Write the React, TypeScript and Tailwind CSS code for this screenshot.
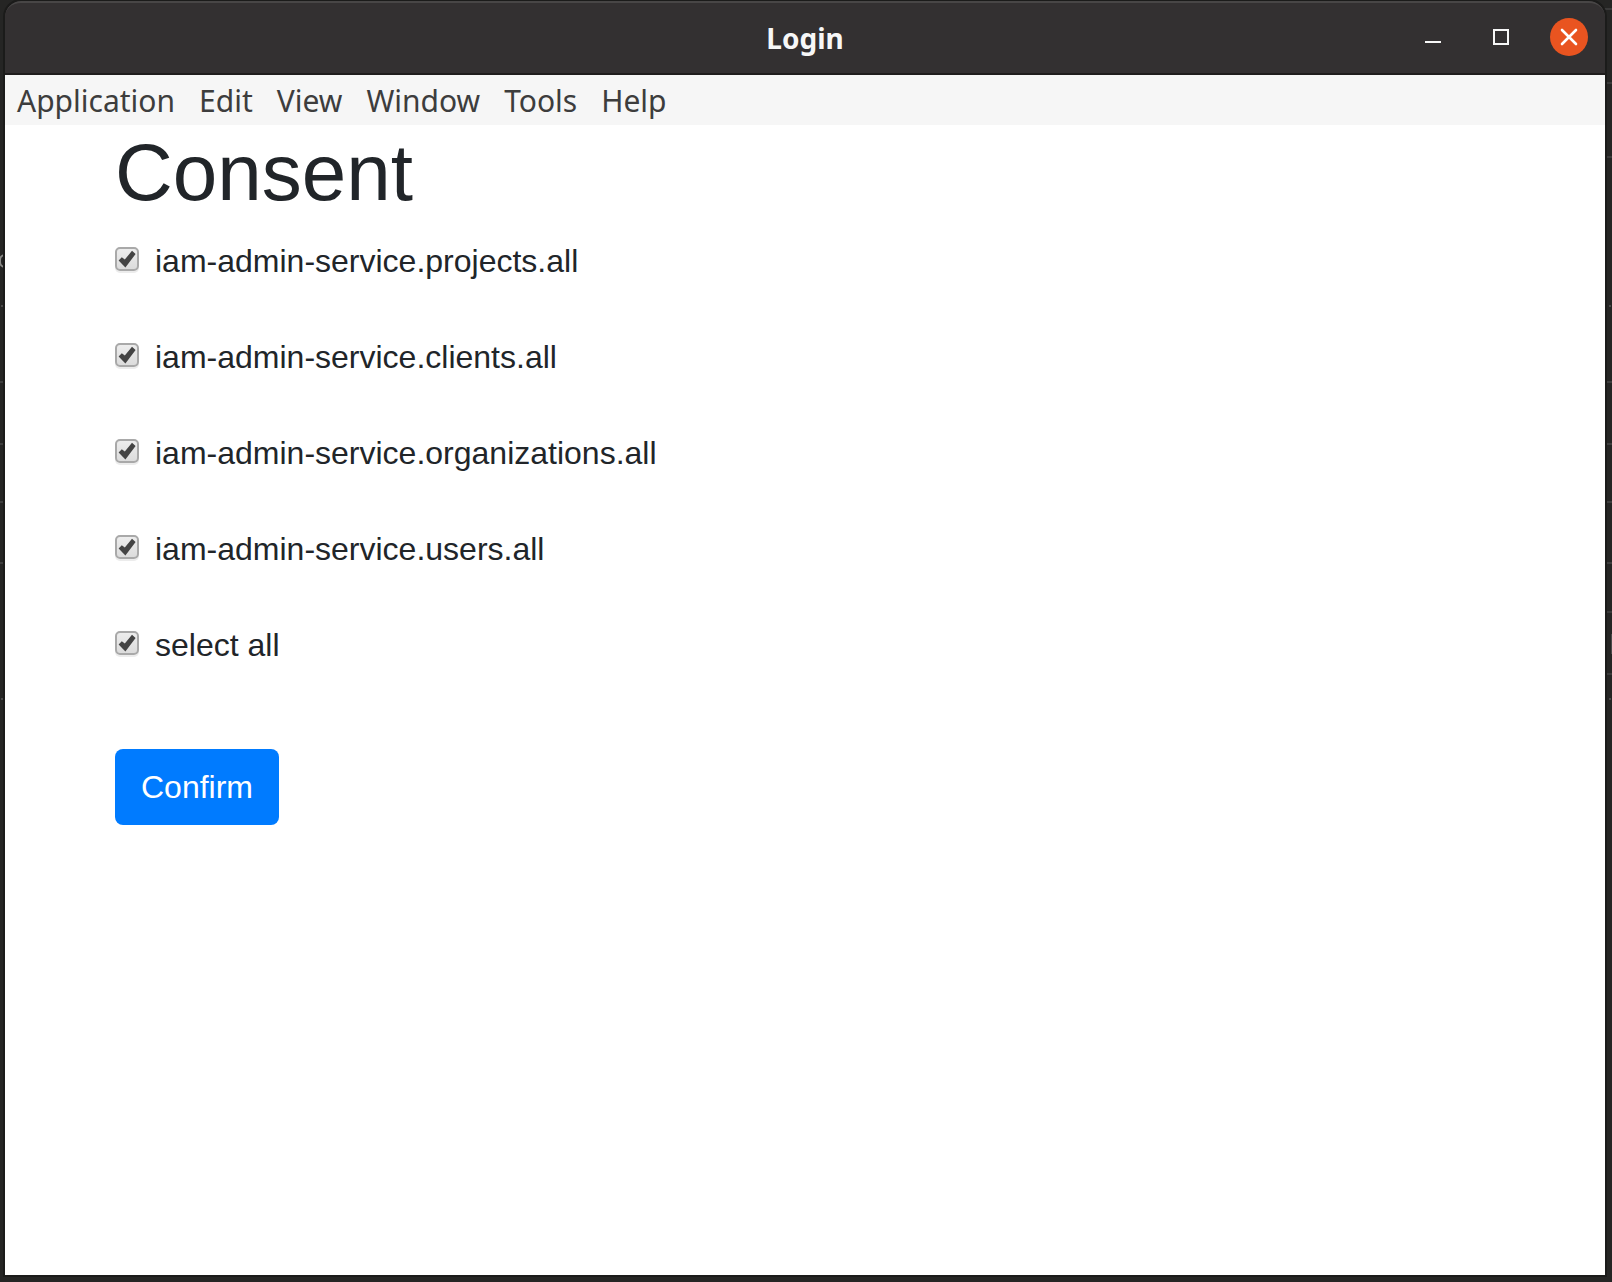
import { useState } from "react";

const menus = ["Application", "Edit", "View", "Window", "Tools", "Help"];

const scopes = [
  "iam-admin-service.projects.all",
  "iam-admin-service.clients.all",
  "iam-admin-service.organizations.all",
  "iam-admin-service.users.all",
];

const rulesBothSides = ["top-[381px]", "top-[443px]", "top-[501px]", "top-[562px]"];
const rulesRight = ["top-[8px]", "top-[82px]", "top-[156px]", "top-[611px]", "top-[673px]"];
const dots = ["top-[305px]", "top-[698px]"];

function Backdrop() {
  return (
    <div aria-hidden="true" className="absolute inset-0 overflow-hidden bg-[#252524]">
      {rulesBothSides.map((top) => (
        <div key={top} className={`absolute inset-x-0 h-0.5 bg-[#3e3e3e] ${top}`} />
      ))}
      {rulesRight.map((top) => (
        <div key={top} className={`absolute right-0 h-0.5 w-2 bg-[#3a3a3a] ${top}`} />
      ))}
      {dots.map((top) => (
        <div key={top} className={`absolute inset-x-px border-x-2 border-[#4a4a4a] h-0.5 ${top}`} />
      ))}
      <div className="absolute -left-px top-[254px] h-[14px] w-3 rounded-full border-2 border-[#8a8a88]" />
      <div className="absolute right-0 top-[634px] h-5 w-px bg-[#4a4a4a]" />
    </div>
  );
}

function CheckRow({
  id,
  label,
  checked,
  onChange,
}: {
  id: string;
  label: string;
  checked: boolean;
  onChange: (value: boolean) => void;
}) {
  return (
    <div className="flex items-start gap-4">
      <span className="relative mt-2.5 size-6 shrink-0">
        <input
          id={id}
          type="checkbox"
          checked={checked}
          onChange={(e) => onChange(e.target.checked)}
          className="peer block size-6 appearance-none rounded-[5px] border-2 border-[#a9a9a9] bg-linear-to-b from-[#ededed] to-[#dcdcdc] shadow-[0_2px_0_#ececec]"
        />
        <svg
          viewBox="0 0 24 24"
          aria-hidden="true"
          className="pointer-events-none absolute inset-0 hidden size-6 peer-checked:block"
        >
          <path d="M3.6 13.4 L6.8 10.2 L9.8 12.6 L17 3.8 L20.6 7 L10.4 20.4 Z" fill="#444444" />
        </svg>
      </span>
      <label htmlFor={id}>{label}</label>
    </div>
  );
}

export default function App() {
  const [checked, setChecked] = useState<boolean[]>(scopes.map(() => true));
  const all = checked.every(Boolean);

  return (
    <div className="relative isolate flex min-h-screen bg-[#252524] pt-px pr-[7px] pb-[7px] pl-[5px]">
      <Backdrop />
      <div className="relative flex flex-1 flex-col overflow-hidden rounded-t-2xl bg-[#333031] shadow-[0_0_0_2px_#1b1b1a]">
        <header className="grid h-[74px] grid-cols-[1fr_auto_1fr] items-center rounded-t-2xl border-t-2 border-b-2 border-t-[#484646] border-b-[#1f1d1d] bg-[#333031]">
          <h2 className="col-start-2 font-['Noto_Sans',sans-serif] text-[28px] leading-9 font-bold text-[#f7f7f7]">
            Login
          </h2>
          <div className="flex items-center justify-end gap-[30px] pr-[17px] pb-0.5 text-[#f7f7f7]">
            <button type="button" aria-label="Minimize" className="size-[38px]">
              <svg viewBox="0 0 38 38" aria-hidden="true">
                <rect x="11" y="23" width="16" height="2" fill="currentColor" />
              </svg>
            </button>
            <button type="button" aria-label="Maximize" className="size-[38px]">
              <svg viewBox="0 0 38 38" aria-hidden="true">
                <rect x="12" y="12" width="14" height="14" fill="none" stroke="currentColor" strokeWidth="2" />
              </svg>
            </button>
            <button type="button" aria-label="Close" className="size-[38px] rounded-full bg-[#e95420]">
              <svg viewBox="0 0 38 38" aria-hidden="true">
                <path d="M12 12 L26 26 M26 12 L12 26" stroke="#fff" strokeWidth="2.6" strokeLinecap="round" />
              </svg>
            </button>
          </div>
        </header>

        <nav className="flex h-[50px] items-center gap-6 bg-[#f6f6f6] pt-0.5 pl-3 font-['Noto_Sans',sans-serif] text-[30px] leading-9 text-[#3d3d3d]">
          {menus.map((m) => (
            <button key={m} type="button">
              {m}
            </button>
          ))}
        </nav>

        <main className="flex-1 bg-white px-[110px] font-['Liberation_Sans',Arial,sans-serif] text-[32px] leading-[48px] text-[#212529]">
          <h1 className="mb-4 text-[80px] leading-[96px]">Consent</h1>
          <form onSubmit={(e) => e.preventDefault()}>
            <div className="flex flex-col gap-12">
              {scopes.map((scope, i) => (
                <CheckRow
                  key={scope}
                  id={scope}
                  label={scope}
                  checked={checked[i]}
                  onChange={(v) => setChecked(checked.map((c, j) => (j === i ? v : c)))}
                />
              ))}
              <CheckRow
                id="select-all"
                label="select all"
                checked={all}
                onChange={(v) => setChecked(scopes.map(() => v))}
              />
            </div>
            <button
              type="submit"
              className="mt-20 rounded-lg bg-[#007bff] px-[26px] py-3.5 text-white"
            >
              Confirm
            </button>
          </form>
        </main>
      </div>
    </div>
  );
}
